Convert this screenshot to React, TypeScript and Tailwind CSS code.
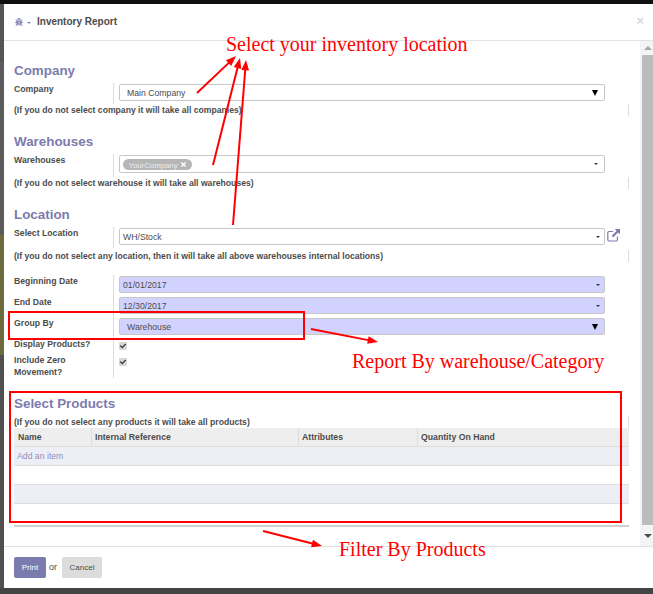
import { ReactNode } from "react";
import { FaBug, FaCheck, FaTimes } from "react-icons/fa";

const arrows = [
  [197, 93, 236, 56],
  [213, 165, 240, 58],
  [233, 225, 246, 60],
  [311, 329, 378, 342],
  [263, 531, 322, 546],
];

function Arrow({ from }: { from: number[] }) {
  const [x1, y1, x2, y2] = from;
  const a = Math.atan2(y2 - y1, x2 - x1);
  const len = 11;
  const wing = 0.36;
  const p1 = `${x2 - len * Math.cos(a - wing)},${y2 - len * Math.sin(a - wing)}`;
  const p2 = `${x2 - len * Math.cos(a + wing)},${y2 - len * Math.sin(a + wing)}`;
  return (
    <g>
      <line x1={x1} y1={y1} x2={x2 - 6 * Math.cos(a)} y2={y2 - 6 * Math.sin(a)} stroke="#ff0000" strokeWidth="2" />
      <polygon points={`${x2},${y2} ${p1} ${p2}`} fill="#ff0000" />
    </g>
  );
}

function Heading({ children, className }: { children: ReactNode; className: string }) {
  return <h2 className={`h-4 text-[13.4px] leading-4 font-bold text-[#7c7bad] ${className}`}>{children}</h2>;
}

function Help({ children }: { children: ReactNode }) {
  return (
    <div className="h-3 w-[615px] border-r border-[#dddddd] text-[8.65px] leading-3 font-bold whitespace-nowrap text-[#4c4c4c]">
      {children}
    </div>
  );
}

function Label({ children }: { children: ReactNode }) {
  return <div className="w-[99px] shrink-0 text-[8.7px] leading-3 font-bold text-[#4c4c4c]">{children}</div>;
}

function Caret({ className = "mr-1" }: { className?: string }) {
  return <span className={`ml-auto h-0 w-0 border-x-2 border-t-2 border-x-transparent border-t-[#333333] ${className}`} />;
}

function BigCaret() {
  return <span className="ml-auto mr-[6px] h-0 w-0 border-x-[3px] border-t-[6px] border-x-transparent border-t-black" />;
}

function Input({ children, tint, h = "h-[17px]" }: { children: ReactNode; tint?: boolean; h?: string }) {
  return (
    <div
      className={`mt-px ml-[5px] flex w-[486px] items-center rounded-[2px] border border-[#c8c8c8] text-[8.7px] text-[#4c4c4c] ${h} ${
        tint ? "bg-[#d2d2ff]" : "bg-white"
      }`}
    >
      {children}
    </div>
  );
}

function Value({ children, wide }: { children: ReactNode; wide?: boolean }) {
  return <span className={`pt-[2px] ${wide ? "ml-[7px]" : "ml-[3px]"}`}>{children}</span>;
}

function Field({ label, children, h = "h-[21px]" }: { label: ReactNode; children: ReactNode; h?: string }) {
  return (
    <div className={`flex ${h}`}>
      <Label>{label}</Label>
      <div className="flex border-l border-[#dddddd]">{children}</div>
    </div>
  );
}

function Check() {
  return (
    <div className="mt-1 ml-[5px] flex h-2 w-2 items-center justify-center rounded-[1px] bg-[#d8d8d8]">
      <FaCheck className="text-[6px] text-[#333333]" />
    </div>
  );
}

function ExternalLink() {
  return (
    <svg className="mt-[2px] ml-[2px] shrink-0" width="13" height="13" viewBox="0 0 13 13" fill="none">
      <path d="M6 2.5H2A1.2 1.2 0 0 0 .8 3.7v7.1A1.2 1.2 0 0 0 2 12h7.2a1.2 1.2 0 0 0 1.2-1.2V7.5" stroke="#7c7bad" strokeWidth="1.2" />
      <path d="M7.8 0H13V5.2L11.1 3.4 6.2 8.3 4.7 6.8 9.6 1.9Z" fill="#7c7bad" />
    </svg>
  );
}

export default function App() {
  return (
    <div className="relative flex h-[594px] w-[653px] flex-col overflow-hidden bg-[#4a4a4a] font-['Liberation_Sans',Arial,sans-serif]">
      <div className="h-1 shrink-0 bg-[#111111]" />
      <div className="flex min-h-0 flex-1">
        <div className="flex w-1 shrink-0 flex-col">
          <div className="h-[58px] bg-[#555555]" />
          <div className="h-[173px] bg-[#5c5c5c]" />
          <div className="h-[120px] bg-[#6b6b3d]" />
          <div className="flex-1 bg-[#505050]" />
        </div>
        <div className="flex min-w-0 flex-1 flex-col bg-white">
          <header className="flex h-[37px] shrink-0 items-center border-b border-[#e2e2e2] pr-[9px] pl-[11px]">
            <FaBug className="text-[8px] text-[#8483b5]" />
            <span className="mt-px ml-1 h-0 w-0 border-x-2 border-t-2 border-x-transparent border-t-[#8483b5]" />
            <h1 className="mb-[2px] ml-[6px] text-[10px] font-bold text-[#4c4c4c]">Inventory Report</h1>
            <span className="mb-[3px] ml-auto text-[13px] font-bold text-[#d8d8d8]">×</span>
          </header>

          <div className="flex min-h-0 flex-1">
            <main className="min-w-0 flex-1 overflow-hidden pl-[10px]">
              <Heading className="mt-[22px]">Company</Heading>
              <div className="mt-1">
                <Field label="Company">
                  <Input>
                    <Value wide>Main Company</Value>
                    <BigCaret />
                  </Input>
                </Field>
              </div>
              <Help>(If you do not select company it will take all companies)</Help>

              <Heading className="mt-[18px]">Warehouses</Heading>
              <div className="mt-1">
                <Field label="Warehouses" h="h-[23px]">
                  <Input h="h-[18px]">
                    <span className="mt-px ml-[3px] flex h-[11px] w-[69px] items-center justify-center gap-[2px] rounded-full bg-[#b6b6b6] pt-[2px] text-[7.8px] text-[#ececec]">
                      YourCompany <FaTimes className="mb-[2px] text-[7px] text-white" />
                    </span>
                    <Caret className="mr-[6px]" />
                  </Input>
                </Field>
              </div>
              <Help>(If you do not select warehouse it will take all warehouses)</Help>

              <Heading className="mt-[18px]">Location</Heading>
              <div className="mt-1">
                <Field label="Select Location">
                  <Input>
                    <Value>WH/Stock</Value>
                    <Caret />
                  </Input>
                  <ExternalLink />
                </Field>
              </div>
              <div className="mt-[2px]">
                <Help>(If you do not select any location, then it will take all above warehouses internal locations)</Help>
              </div>

              <div className="mt-[13px]">
                <Field label="Beginning Date">
                  <Input tint>
                    <Value>01/01/2017</Value>
                    <Caret />
                  </Input>
                </Field>
                <Field label="End Date">
                  <Input tint>
                    <Value>12/30/2017</Value>
                    <Caret />
                  </Input>
                </Field>
                <Field label="Group By">
                  <Input tint>
                    <Value wide>Warehouse</Value>
                    <BigCaret />
                  </Input>
                </Field>
                <Field label="Display Products?" h="h-4">
                  <Check />
                </Field>
                <Field label="Include Zero Movement?" h="h-6">
                  <Check />
                </Field>
              </div>

              <Heading className="mt-[18px]">Select Products</Heading>
              <div className="mt-1">
                <Help>(If you do not select any products it will take all products)</Help>
              </div>
              <div className="w-[615px] text-[8.7px] text-[#4c4c4c]">
                <div className="flex h-[19px] items-center border-b border-[#dddddd] bg-[#eeeeee] font-bold">
                  <div className="flex h-full w-[78px] items-center border-r border-[#dddddd] pt-[2px] pl-1">Name</div>
                  <div className="flex h-full w-[207px] items-center border-r border-[#dddddd] pt-[2px] pl-[3px]">Internal Reference</div>
                  <div className="flex h-full w-[119px] items-center border-r border-[#dddddd] pt-[2px] pl-[3px]">Attributes</div>
                  <div className="pt-[2px] pl-[3px]">Quantity On Hand</div>
                </div>
                <div className="flex h-[19px] items-center border-b border-[#dddddd] bg-[#eeeef6] pt-[2px] pl-[3px] text-[#8f8ec0]">
                  Add an item
                </div>
                <div className="h-[19px] border-b border-[#dddddd] bg-white" />
                <div className="h-[19px] border-b border-[#dddddd] bg-[#eeeef6]" />
                <div className="h-[19px] bg-white" />
                <div className="mt-[2px] border-b-2 border-[#cfcfcf]" />
              </div>
            </main>

            <div className="flex w-[13px] shrink-0 flex-col bg-[#f4f4f4] pl-[2px]">
              <div className="flex h-[14px] items-center justify-center">
                <span className="h-0 w-0 border-x-[4px] border-b-[4px] border-x-transparent border-b-[#a8a8a8]" />
              </div>
              <div className="h-[470px] bg-[#bcbcbc]" />
              <div className="flex flex-1 items-center justify-center">
                <span className="h-0 w-0 border-x-[4px] border-t-[4px] border-x-transparent border-t-[#505050]" />
              </div>
            </div>
          </div>

          <footer className="flex h-[42px] shrink-0 items-center border-t border-[#e2e2e2] pl-[10px]">
            <button className="h-[21px] w-8 rounded-[2px] bg-[#7c7bad] text-[8px] text-white">Print</button>
            <span className="ml-[3px] w-[7px] text-[9px] text-[#4c4c4c]">or</span>
            <button className="ml-[6px] h-[21px] w-10 rounded-[2px] bg-[#dcdcdc] text-[8px] text-[#4c4c4c]">Cancel</button>
          </footer>
        </div>
      </div>
      <div className="h-1.5 shrink-0 bg-[#444444]" />

      {/* red notes drawn on top of the screenshot */}
      <svg className="pointer-events-none absolute inset-0" width="653" height="594">
        {arrows.map((a) => (
          <Arrow key={a.join()} from={a} />
        ))}
      </svg>
      <div className="absolute top-[311px] left-2 h-[29px] w-[297px] border-2 border-[#ff0000]" />
      <div className="absolute top-[391px] left-[9px] h-[132px] w-[613px] border-2 border-[#ff0000]" />
      <span className="absolute top-[32px] left-[226px] font-['Liberation_Serif',serif] text-[20px] leading-6 whitespace-nowrap text-[#ff0000]">
        Select your inventory location
      </span>
      <span className="absolute top-[349px] left-[352px] font-['Liberation_Serif',serif] text-[20px] leading-6 whitespace-nowrap text-[#ff0000]">
        Report By warehouse/Category
      </span>
      <span className="absolute top-[537px] left-[339px] font-['Liberation_Serif',serif] text-[20px] leading-6 whitespace-nowrap text-[#ff0000]">
        Filter By Products
      </span>
    </div>
  );
}
